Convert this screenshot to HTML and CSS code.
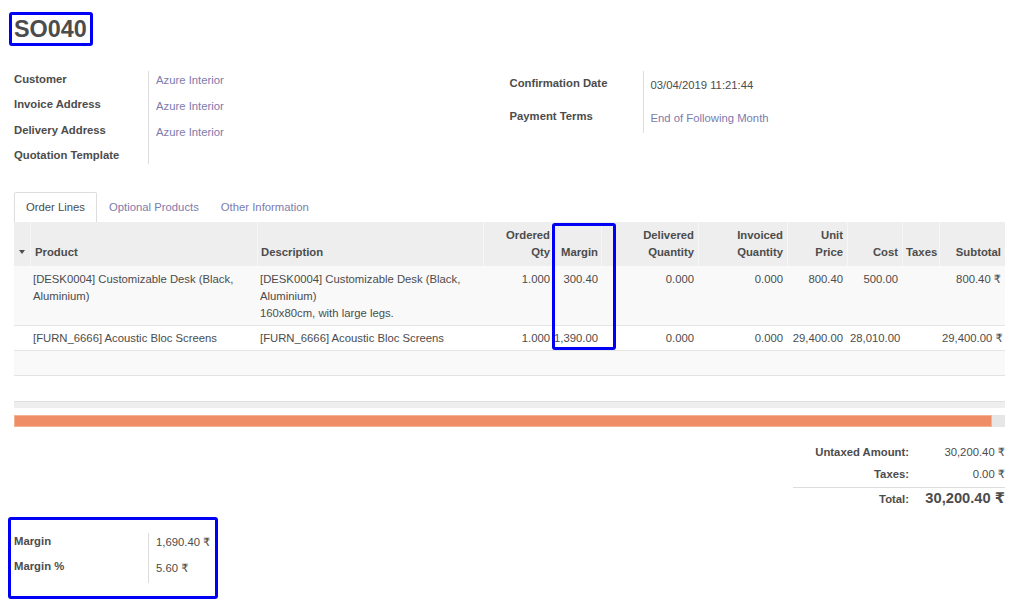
FILE: index.html
```html
<!DOCTYPE html>
<html>
<head>
<meta charset="utf-8">
<link rel="stylesheet" href="styles.css">
</head>
<body>
<div class="sheet">
  <div class="title-wrap"><h1 class="title">SO040</h1></div>

  <div class="groups">
    <div class="group">
      <div class="labels left-labels">
        <div>Customer</div>
        <div>Invoice Address</div>
        <div>Delivery Address</div>
        <div>Quotation Template</div>
      </div>
      <div class="values left-values">
        <div class="link">Azure Interior</div>
        <div class="link">Azure Interior</div>
        <div class="link">Azure Interior</div>
      </div>
    </div>
    <div class="group">
      <div class="labels right-labels">
        <div>Confirmation Date</div>
        <div>Payment Terms</div>
      </div>
      <div class="values right-values">
        <div>03/04/2019 11:21:44</div>
        <div class="link">End of Following Month</div>
      </div>
    </div>
  </div>

  <div class="tabs">
    <div class="tab active">Order Lines</div>
    <div class="tab">Optional Products</div>
    <div class="tab">Other Information</div>
  </div>

  <div class="table-wrap">
    <table class="lines">
      <colgroup>
        <col class="c-handle">
        <col class="c-product">
        <col class="c-desc">
        <col class="c-qty">
        <col class="c-margin">
        <col class="c-deliv">
        <col class="c-inv">
        <col class="c-price">
        <col class="c-cost">
        <col class="c-taxes">
        <col class="c-sub">
      </colgroup>
      <thead>
        <tr>
          <th class="handle"><span class="caret"></span></th>
          <th class="left pad-first">Product</th>
          <th class="left">Description</th>
          <th class="num qty">Ordered<br>Qty</th>
          <th class="num mgn">Margin</th>
          <th class="num">Delivered<br>Quantity</th>
          <th class="num">Invoiced<br>Quantity</th>
          <th class="num">Unit<br>Price</th>
          <th class="num">Cost</th>
          <th class="left">Taxes</th>
          <th class="num">Subtotal</th>
        </tr>
      </thead>
      <tbody>
        <tr class="odd">
          <td></td>
          <td>[DESK0004] Customizable Desk (Black, Aluminium)</td>
          <td>[DESK0004] Customizable Desk (Black, Aluminium)<br>160x80cm, with large legs.</td>
          <td class="num qty">1.000</td>
          <td class="num mgn">300.40</td>
          <td class="num">0.000</td>
          <td class="num">0.000</td>
          <td class="num">800.40</td>
          <td class="num">500.00</td>
          <td></td>
          <td class="num">800.40 ₹</td>
        </tr>
        <tr class="even">
          <td></td>
          <td>[FURN_6666] Acoustic Bloc Screens</td>
          <td>[FURN_6666] Acoustic Bloc Screens</td>
          <td class="num qty">1.000</td>
          <td class="num mgn">1,390.00</td>
          <td class="num">0.000</td>
          <td class="num">0.000</td>
          <td class="num">29,400.00</td>
          <td class="num">28,010.00</td>
          <td></td>
          <td class="num">29,400.00 ₹</td>
        </tr>
        <tr class="odd empty">
          <td colspan="11"></td>
        </tr>
      </tbody>
    </table>
    <div class="col-highlight"></div>
  </div>

  <div class="list-foot"></div>
  <div class="progress"><div class="fill" style="width: 98.7%"></div></div>

  <div class="totals">
    <div class="tl">Untaxed Amount:</div><div class="tv">30,200.40 ₹</div>
    <div class="tl">Taxes:</div><div class="tv">0.00 ₹</div>
    <div class="divider"></div>
    <div class="tl grand-l">Total:</div><div class="tv grand">30,200.40 ₹</div>
  </div>

  <div class="margin-box">
    <div class="group">
      <div class="labels bottom-labels">
        <div>Margin</div>
        <div>Margin %</div>
      </div>
      <div class="values bottom-values">
        <div>1,690.40 ₹</div>
        <div>5.60 ₹</div>
      </div>
    </div>
  </div>
</div>
</body>
</html>
```

FILE: styles.css
```css
html, body {
  margin: 0;
  padding: 0;
  background: #fff;
}

body {
  font-family: "Liberation Sans", Arial, "DejaVu Sans", sans-serif;
  font-size: 11.3px;
  color: #4c4c4c;
}

.sheet {
  padding: 0 14px;
}

/* Title */
.title-wrap {
  padding-top: 12px;
}

.title {
  display: inline-block;
  margin: 0 0 0 -5px;
  padding: 0 3px 0 2px;
  font-size: 23.4px;
  line-height: 28px;
  font-weight: bold;
  color: #4c4c4c;
  border: 3px solid #0000f4;
  border-radius: 3px;
}

/* Field groups */
.groups {
  margin-top: 25px;
  display: grid;
  grid-template-columns: 1fr 1fr;
}

.group {
  display: flex;
  align-items: flex-start;
}

.labels {
  display: flex;
  flex-direction: column;
  font-weight: bold;
  border-right: 1px solid #dcdcdc;
}

.labels div,
.values div {
  line-height: 17px;
  white-space: nowrap;
}

.values {
  display: flex;
  flex-direction: column;
  padding-left: 7px;
}

.link {
  color: #7c7bad;
}

.left-labels {
  width: 134px;
  gap: 8.3px;
}

.left-values {
  gap: 9px;
  padding-top: 1px;
}

.right-labels {
  width: 133px;
  gap: 4px;
}

.right-labels div {
  height: 29px;
  padding-top: 3.5px;
  box-sizing: border-box;
}

.right-values {
  gap: 4px;
}

.right-values div {
  height: 29px;
  padding-top: 5.5px;
  box-sizing: border-box;
}

/* Tabs */
.tabs {
  margin-top: 28px;
  display: flex;
  height: 30px;
}

.tab {
  padding: 0 11px;
  line-height: 29px;
  border: 1px solid transparent;
  border-bottom: none;
  color: #7c7bad;
  border-radius: 2px 2px 0 0;
}

.tab:nth-child(3) {
  margin-left: -2px;
}

.tab.active {
  color: #4c4c4c;
  border-color: #dddddd;
  background: #fff;
}

/* Lines table */
.table-wrap {
  position: relative;
}

.lines {
  width: 100%;
  table-layout: fixed;
  border-collapse: separate;
  border-spacing: 0;
}

.c-handle { width: 16px; }
.c-product { width: 227px; }
.c-desc { width: 226px; }
.c-qty { width: 68px; }
.c-margin { width: 50px; }
.c-deliv { width: 97px; }
.c-inv { width: 89px; }
.c-price { width: 60px; }
.c-cost { width: 55px; }
.c-taxes { width: 37px; }
.c-sub { width: 66px; }

.lines th {
  background: #eeeeee;
  font-weight: bold;
  line-height: 17px;
  padding: 5px 4px;
  vertical-align: bottom;
  box-shadow: inset 1px 0 0 #f6f6f6;
  white-space: nowrap;
  color: #4c4c4c;
}

.lines th.handle {
  box-shadow: none;
  padding: 5px 0 5px 5px;
  text-align: left;
}

.caret {
  display: inline-block;
  width: 0;
  height: 0;
  border-top: 4px solid #4c4c4c;
  border-left: 3.5px solid transparent;
  border-right: 3.5px solid transparent;
  vertical-align: middle;
  margin-bottom: 1px;
}

.lines th.left {
  text-align: left;
}

.lines th.pad-first {
  padding-left: 5px;
}

.lines td {
  line-height: 17px;
  padding: 5px 3px 3px 3px;
  vertical-align: top;
  overflow: visible;
}

.lines .num {
  text-align: right;
  white-space: nowrap;
}

.lines td.num {
  padding-right: 4px;
}

.lines .qty {
  padding-right: 1px;
}

.lines td.qty {
  padding-right: 1px;
}

.lines .mgn {
  padding-left: 0;
  padding-right: 3px;
}

.lines td.mgn {
  padding-right: 3px;
}

.lines tr.odd td {
  background: #f9f9f9;
}

.lines tr.even td {
  background: #fff;
  border-top: 1px solid #e5e5e5;
  padding-top: 4px;
  padding-bottom: 3px;
}

.lines tr.empty td {
  height: 26px;
  padding: 0;
  box-sizing: border-box;
  border-top: 1px solid #e5e5e5;
  border-bottom: 1px solid #e3e3e3;
}

.col-highlight {
  position: absolute;
  top: 1px;
  left: 538px;
  width: 64px;
  height: 127px;
  box-sizing: border-box;
  border: 3px solid #0000f4;
  border-radius: 3px;
  pointer-events: none;
}

/* Footer bars */
.list-foot {
  margin-top: 25px;
  height: 6px;
  background: #eeeeee;
  border-top: 1px solid #e0e0e0;
}

.progress {
  margin-top: 7px;
  height: 12px;
  background: #e6e6e6;
}

.fill {
  height: 100%;
  background: #ef8d66;
  box-shadow: inset 0 0 0 1px #f3b295;
}

/* Totals */
.totals {
  margin-top: 14px;
  margin-left: auto;
  width: 212px;
  display: grid;
  grid-template-columns: 116px 96px;
  align-items: baseline;
}

.tl {
  text-align: right;
  font-weight: bold;
  line-height: 22px;
}

.tv {
  text-align: right;
  line-height: 22px;
  white-space: nowrap;
}

.divider {
  grid-column: 1 / 3;
  margin-top: 2px;
  border-top: 1px solid #dddddd;
}

.grand-l,
.tv.grand {
  line-height: 20px;
}

.tv.grand {
  font-size: 14.7px;
  font-weight: bold;
}

/* Margin box */
.margin-box {
  margin-top: 8px;
  margin-left: -6px;
  width: 210px;
  box-sizing: border-box;
  border: 3px solid #0000f4;
  border-radius: 3px;
  padding: 13px 3px;
}

.bottom-labels {
  width: 134px;
  gap: 8px;
  padding-bottom: 8px;
}

.bottom-values {
  gap: 9px;
  padding-top: 1px;
}
```
